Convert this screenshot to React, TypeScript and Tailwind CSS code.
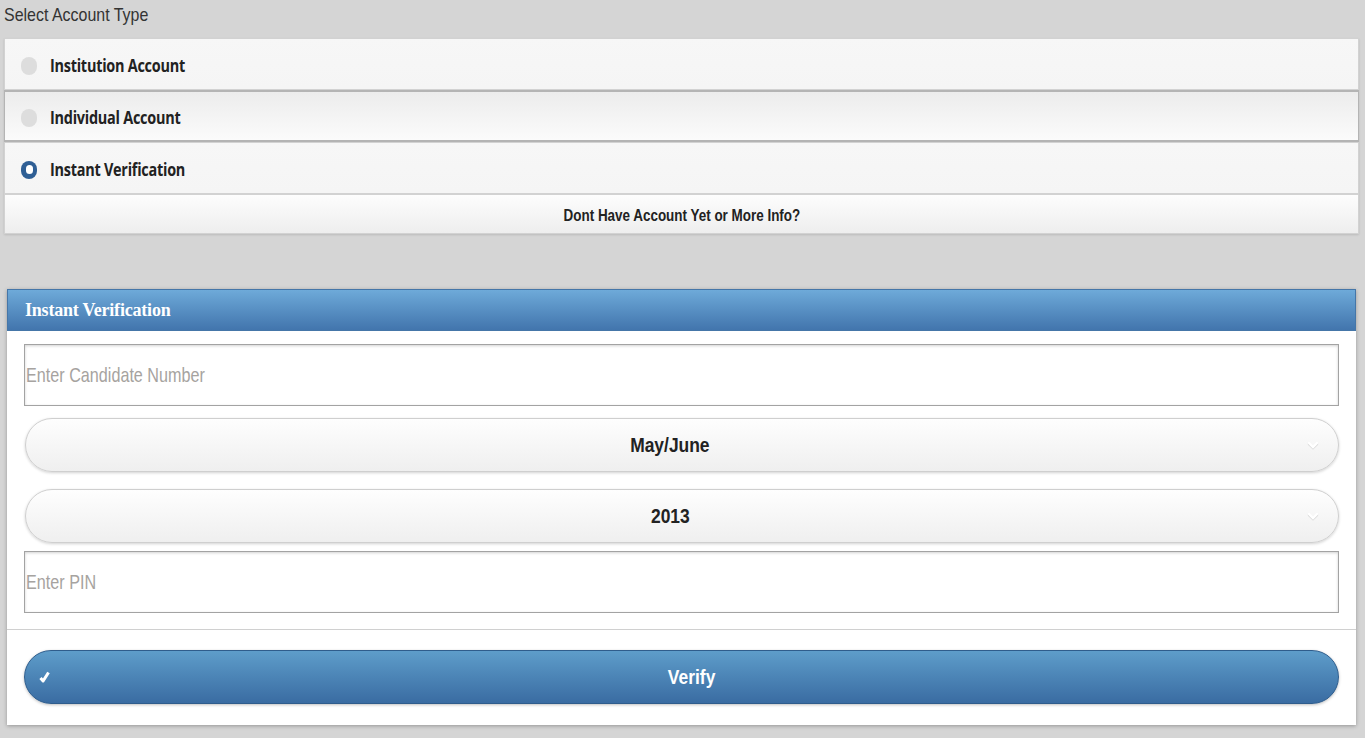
const sans = "font-['Liberation_Sans',Arial,sans-serif]";

interface AccountOptionProps {
  label: string;
  selected?: boolean;
  strong?: boolean;
}

function AccountOption({ label, selected, strong }: AccountOptionProps) {
  return (
    <div
      className={
        "h-[52px] flex items-center gap-[13px] pl-[16px] pt-[3px] bg-gradient-to-b " +
        (strong
          ? "from-[#ececec] to-[#fbfbfb] border-y-2 border-x border-[#b4b4b4]"
          : "from-[#f7f7f7] to-[#f5f5f5] border border-[#d2d2d2]")
      }
    >
      {selected ? (
        <span className="w-4 h-[18px] rounded-full bg-[#2f5f95] flex items-center justify-center">
          <span className="w-[7px] h-[9px] rounded-full bg-white" />
        </span>
      ) : (
        <span className="w-4 h-[18px] rounded-full bg-[#dddddd]" />
      )}
      <span className="inline-block origin-left scale-x-[0.85] font-['Open_Sans',sans-serif] font-bold text-[17px] text-[#222] tracking-[-0.3px]">
        {label}
      </span>
    </div>
  );
}

function SelectPill({ value }: { value: string }) {
  return (
    <div className="relative h-[54px] rounded-full border border-[#cfcfcf] bg-gradient-to-b from-[#fefefe] to-[#efefef] shadow-[0_1px_3px_rgba(0,0,0,0.18)] flex items-center justify-center pr-[24px]">
      <span className={sans + " inline-block scale-x-[0.83] font-bold text-[21px] text-[#222]"}>
        {value}
      </span>
      <svg
        className="absolute right-[19px] top-[22px]"
        width="12"
        height="10"
        viewBox="0 0 12 10"
        fill="none"
      >
        <path d="M2 3l4 4 4-4" stroke="#dcdcdc" strokeWidth="2.6" strokeLinecap="round" />
        <path d="M2 2l4 4 4-4" stroke="#ffffff" strokeWidth="2.4" strokeLinecap="round" />
      </svg>
    </div>
  );
}

function TextBox({ placeholder }: { placeholder: string }) {
  return (
    <div className="h-[62px] w-full flex items-center border border-[#a3a3a3] bg-white shadow-[inset_0_1px_3px_rgba(0,0,0,0.18)] px-px">
      <span className={sans + " inline-block origin-left scale-x-[0.77] text-[21px] text-[#a6a3a0]"}>
        {placeholder}
      </span>
    </div>
  );
}

export default function App() {
  return (
    <div className="min-h-[738px] w-full bg-[#d5d5d5] pr-[6px]">
      <div className="h-[38px] pl-[4px] pt-[1px]">
        <span className={sans + " inline-block origin-left scale-x-[0.84] text-[19px] text-[#333]"}>
          Select Account Type
        </span>
      </div>

      <div className="ml-[4px] flex flex-col shadow-[0_1px_2px_rgba(0,0,0,0.12)]">
        <AccountOption label="Institution Account" />
        <AccountOption label="Individual Account" strong />
        <AccountOption label="Instant Verification" selected />
        <div className="h-[40px] flex items-center justify-center pt-[3px] bg-gradient-to-b from-[#fdfdfd] to-[#eeeeee] border border-[#d2d2d2]">
          <span className={sans + " inline-block scale-x-[0.84] font-bold text-[16px] text-[#222]"}>
            Dont Have Account Yet or More Info?
          </span>
        </div>
      </div>

      <div className="ml-[7px] mr-[3px] mt-[55px] bg-white shadow-[0_1px_4px_rgba(0,0,0,0.3)]">
        <div className="h-[42px] flex items-center pl-[17px] bg-gradient-to-b from-[#6eaad9] to-[#4275ad] border border-[#4576a8]">
          <span className="font-['Liberation_Serif',serif] font-bold text-[18px] text-white tracking-[-0.2px]">
            Instant Verification
          </span>
        </div>
        <div className="px-[17px] pt-[13px] pb-[16px] flex flex-col">
          <TextBox placeholder="Enter Candidate Number" />
          <div className="mt-[12px] pl-px">
            <SelectPill value="May/June" />
          </div>
          <div className="mt-[17px] pl-px">
            <SelectPill value="2013" />
          </div>
          <div className="mt-[8px]">
            <TextBox placeholder="Enter PIN" />
          </div>
        </div>
        <div className="border-t border-[#d0d0d0] px-[17px] pt-[20px] pb-[21px]">
          <button className="relative w-full h-[54px] rounded-full border border-[#2f5d8c] bg-gradient-to-b from-[#5e9dca] to-[#3a6ca2] shadow-[0_1px_3px_rgba(0,0,0,0.25)] flex items-center justify-center pl-[20px]">
            <svg
              className="absolute left-[14px] top-[20px]"
              width="11"
              height="12"
              viewBox="0 0 11 12"
              fill="none"
            >
              <path d="M1.5 7l2.6 3L9.5 1.5" stroke="#fff" strokeWidth="3" strokeLinejoin="round" />
            </svg>
            <span className={sans + " inline-block scale-x-[0.83] font-bold text-[21px] text-white"}>
              Verify
            </span>
          </button>
        </div>
      </div>
    </div>
  );
}
